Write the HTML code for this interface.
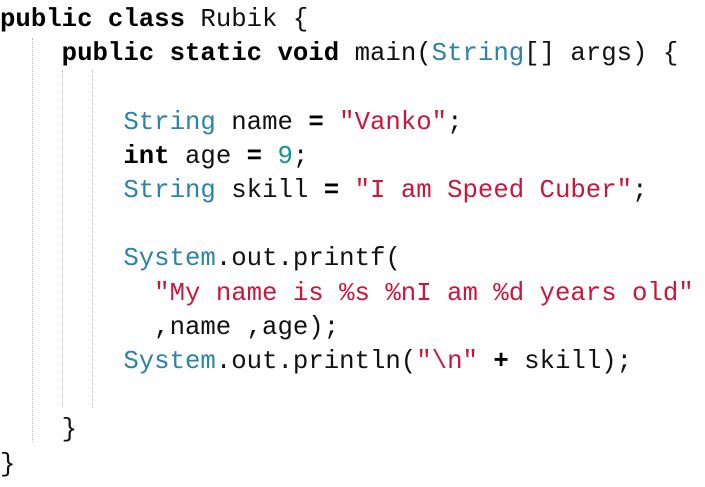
<!DOCTYPE html>
<html><head><style>
body{margin:0;width:705px;height:487px;background:#fff;overflow:hidden;position:relative}
pre{margin:0;position:absolute;left:0;top:3px;font-family:"Liberation Mono",monospace;font-size:25.7px;line-height:34.2px;color:#111}
b{font-weight:bold;color:#000}
.t{color:#2b84a6}.s{color:#c8163c}.n{color:#13948a}
.g{position:absolute;width:0;border-left:1px dotted #bbb}
</style></head><body>
<div class="g" style="left:32px;top:38px;height:404px"></div>
<div class="g" style="left:62px;top:70px;height:338px"></div>
<div class="g" style="left:92px;top:70px;height:338px"></div>
<pre><b>public class</b> Rubik {
    <b>public static void</b> main(<span class="t">String</span>[] args) {

        <span class="t">String</span> name <b>=</b> <span class="s">"Vanko"</span>;
        <b>int</b> age <b>=</b> <span class="n">9</span>;
        <span class="t">String</span> skill <b>=</b> <span class="s">"I am Speed Cuber"</span>;

        <span class="t">System</span>.out.printf(
          <span class="s">"My name is %s %nI am %d years old"</span>
          ,name ,age);
        <span class="t">System</span>.out.println(<span class="s">"\n"</span> <b>+</b> skill);

    }
}</pre>
</body></html>
